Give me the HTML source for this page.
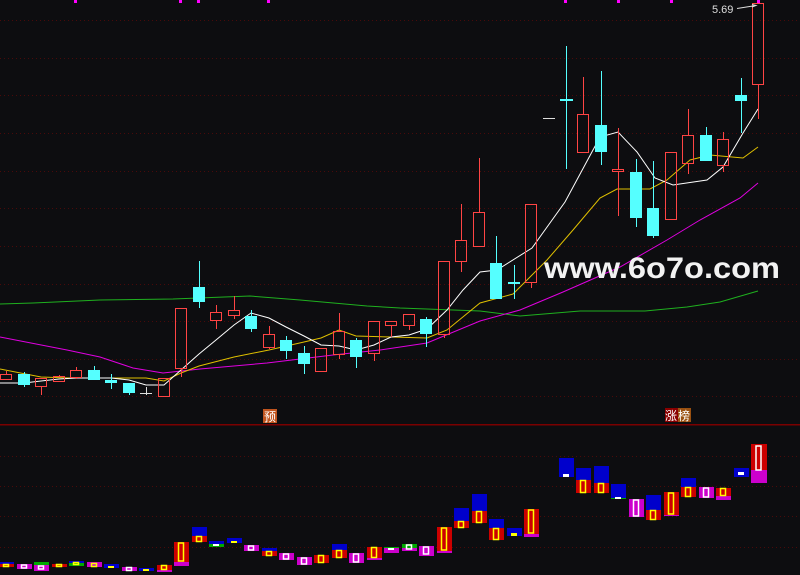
<!DOCTYPE html>
<html><head><meta charset="utf-8"><style>
html,body{margin:0;padding:0;background:#0d0d10;width:800px;height:575px;overflow:hidden}
svg{display:block}
</style></head><body>
<svg width="800" height="575" viewBox="0 0 800 575" xmlns="http://www.w3.org/2000/svg" shape-rendering="crispEdges">
<rect width="800" height="575" fill="#0d0d10"/>
<g stroke="#4a0a0a" stroke-dasharray="1,3" stroke-width="1">
<line x1="0" y1="20.5" x2="800" y2="20.5"/><line x1="0" y1="58.5" x2="800" y2="58.5"/>
<line x1="0" y1="95.5" x2="800" y2="95.5"/><line x1="0" y1="133.5" x2="800" y2="133.5"/>
<line x1="0" y1="171.5" x2="800" y2="171.5"/><line x1="0" y1="208.5" x2="800" y2="208.5"/>
<line x1="0" y1="246.5" x2="800" y2="246.5"/><line x1="0" y1="284.5" x2="800" y2="284.5"/>
<line x1="0" y1="321.5" x2="800" y2="321.5"/><line x1="0" y1="359.5" x2="800" y2="359.5"/>
<line x1="0" y1="396.5" x2="800" y2="396.5"/>
<line x1="0" y1="456.5" x2="800" y2="456.5"/><line x1="0" y1="486.5" x2="800" y2="486.5"/>
<line x1="0" y1="516.5" x2="800" y2="516.5"/><line x1="0" y1="547.5" x2="800" y2="547.5"/>
</g>
<line x1="0" y1="424.5" x2="800" y2="424.5" stroke="#7a0000" stroke-width="1.5"/>
<g fill="#ff00ff">
<rect x="74" y="0" width="3" height="3"/><rect x="179" y="0" width="3" height="3"/><rect x="197" y="0" width="3" height="3"/><rect x="267" y="0" width="3" height="3"/>
<rect x="564" y="0" width="3" height="3"/><rect x="617" y="0" width="3" height="3"/><rect x="670" y="0" width="3" height="3"/><rect x="757" y="0" width="3" height="3"/>
</g>
<g fill="none" stroke-width="1" shape-rendering="auto">
<polyline stroke="#1fb01f" points="0,304 33,303 100,300 173,299 250,296 300,300 367,306 400,308 480,311 520,316 580,311 645,311 687,307 720,302 758,291"/>
<polyline stroke="#e000e0" points="0,337 67,350 100,357 133,368 163,373 200,369 267,363 333,355 380,350 427,343 480,321 520,310 563,292 620,267 667,240 700,220 740,198 758,183"/>
<polyline stroke="#e0c000" points="0,369 41,377 70,378 146,378 164,381 181,373 199,366 234,357 269,350 304,342 321,338 339,330 356,336 391,337 427,338 447,330 480,303 513,294 547,260 573,230 600,198 617,189 650,189 667,180 690,160 710,155 743,158 758,147"/>
<polyline stroke="#ffffff" points="0,383 24,383 41,381 59,379 76,378 111,378 129,380 146,385 164,385 181,370 199,354 216,340 234,325 251,313 269,318 286,327 304,336 321,345 339,346 356,350 374,345 391,337 409,335 427,329 447,310 463,290 480,272 497,270 532,248 565,202 593,150 600,137 618,132 637,152 655,178 673,185 707,180 723,167 743,133 758,109"/>
</g>
<g stroke="#ff4444" fill="none" stroke-width="1">
<path d="M6.5 371V374M6.5 379V380M41.5 386V395M59.5 375V376M59.5 381V382M76.5 367V370M76.5 377V379M181.5 368V377M216.5 305V312M216.5 320V329M234.5 296V310M234.5 315V319M269.5 326V334M269.5 347V349M339.5 313V331M339.5 354V359M374.5 353V361M391.5 325V337M409.5 325V330M444.5 334V338M461.5 204V240M461.5 261V272M479.5 158V212M531.5 282V288M583.5 77V114M618.5 128V169M618.5 171V216M688.5 109V135M688.5 163V174M723.5 132V139M723.5 165V172M758.5 84V119"/>
<rect x="0.5" y="374.5" width="11" height="5"/><rect x="35.5" y="378.5" width="11" height="8"/>
<rect x="53.5" y="376.5" width="11" height="5"/><rect x="70.5" y="370.5" width="11" height="7"/>
<rect x="158.5" y="378.5" width="11" height="18"/><rect x="175.5" y="308.5" width="11" height="60"/>
<rect x="210.5" y="312.5" width="11" height="8"/><rect x="228.5" y="310.5" width="11" height="5"/>
<rect x="263.5" y="334.5" width="11" height="13"/><rect x="315.5" y="348.5" width="11" height="23"/>
<rect x="333.5" y="331.5" width="11" height="23"/><rect x="368.5" y="321.5" width="11" height="32"/>
<rect x="385.5" y="321.5" width="11" height="4"/><rect x="403.5" y="314.5" width="11" height="11"/>
<rect x="438.5" y="261.5" width="11" height="73"/><rect x="455.5" y="240.5" width="11" height="21"/>
<rect x="473.5" y="212.5" width="11" height="34"/><rect x="525.5" y="204.5" width="11" height="78"/>
<rect x="577.5" y="114.5" width="11" height="38"/><rect x="612.5" y="169.5" width="11" height="2"/>
<rect x="665.5" y="152.5" width="11" height="67"/><rect x="682.5" y="135.5" width="11" height="28"/>
<rect x="717.5" y="139.5" width="11" height="26"/><rect x="752.5" y="3.5" width="11" height="81"/>
</g>
<g stroke="#55ffff" stroke-width="1">
<path d="M24.5 372V387M94.5 366V380M111.5 374V389M129.5 383V395M199.5 261V308M251.5 310V332M286.5 336V359M304.5 346V374M356.5 338V368M426.5 317V347M496.5 236V299M514.5 265V299M566.5 46V169M601.5 71V165M636.5 159V227M653.5 161V238M706.5 127V161M741.5 78V133"/>
</g>
<g fill="#55ffff">
<rect x="18" y="374" width="12" height="11"/><rect x="88" y="370" width="12" height="10"/>
<rect x="105" y="380" width="12" height="3"/><rect x="123" y="383" width="12" height="10"/>
<rect x="193" y="287" width="12" height="15"/><rect x="245" y="316" width="12" height="13"/>
<rect x="280" y="340" width="12" height="11"/><rect x="298" y="353" width="12" height="11"/>
<rect x="350" y="340" width="12" height="17"/><rect x="420" y="319" width="12" height="15"/>
<rect x="490" y="263" width="12" height="36"/><rect x="508" y="282" width="12" height="2"/>
<rect x="560" y="99" width="13" height="2"/><rect x="595" y="125" width="12" height="27"/>
<rect x="630" y="172" width="12" height="46"/><rect x="647" y="208" width="12" height="28"/>
<rect x="700" y="135" width="12" height="26"/><rect x="735" y="95" width="12" height="6"/>
</g>
<g stroke="#dddddd" stroke-width="1">
<path d="M140 393.5H152M146.5 387V395M543 118.5H555"/>
</g>
<text x="712" y="13" font-family="Liberation Sans, sans-serif" font-size="11" fill="#dddddd">5.69</text>
<path d="M737 8.5L756 5.5M752 4.5L756 5.5L752 7" stroke="#dddddd" fill="none" shape-rendering="auto"/>
<text x="544" y="278" font-family="Liberation Sans, sans-serif" font-weight="bold" font-size="30" fill="#f2f2f2" textLength="236" lengthAdjust="spacingAndGlyphs">www.6o7o.com</text>
<rect x="263" y="409" width="14" height="14" fill="#c0541e"/>
<text x="264" y="421" font-family="Noto Sans CJK SC, sans-serif" font-size="12" fill="#fff">预</text>
<rect x="665" y="408" width="13" height="14" fill="#8a0000"/><rect x="678" y="408" width="13" height="14" fill="#9a5010"/>
<text x="665" y="420" font-family="Noto Sans CJK SC, sans-serif" font-size="12" fill="#fff">涨</text>
<text x="678" y="420" font-family="Noto Sans CJK SC, sans-serif" font-size="12" fill="#fff">榜</text>
<g>
<rect x="0" y="562" width="14" height="2" fill="#0000cc"/><rect x="0" y="564" width="14" height="3" fill="#cc0000"/>
<rect x="17" y="564" width="15" height="5" fill="#cc00cc"/>
<rect x="34" y="562" width="15" height="3" fill="#00aa00"/><rect x="34" y="565" width="15" height="6" fill="#cc00cc"/>
<rect x="52" y="564" width="15" height="3" fill="#cc0000"/>
<rect x="69" y="561" width="15" height="2" fill="#0000cc"/><rect x="69" y="563" width="15" height="3" fill="#00aa00"/>
<rect x="87" y="562" width="15" height="5" fill="#cc00cc"/>
<rect x="104" y="564" width="15" height="4" fill="#0000cc"/>
<rect x="122" y="567" width="15" height="4" fill="#cc00cc"/>
<rect x="139" y="568" width="15" height="3" fill="#0000cc"/>
<rect x="157" y="565" width="15" height="5" fill="#cc0000"/><rect x="157" y="570" width="15" height="2" fill="#cc00cc"/>
<rect x="174" y="542" width="15" height="20" fill="#cc0000"/><rect x="174" y="562" width="15" height="4" fill="#cc00cc"/>
<rect x="192" y="527" width="15" height="9" fill="#0000cc"/><rect x="192" y="536" width="15" height="6" fill="#cc0000"/>
<rect x="209" y="541" width="15" height="3" fill="#0000cc"/><rect x="209" y="544" width="15" height="3" fill="#00aa00"/>
<rect x="227" y="538" width="15" height="5" fill="#0000cc"/>
<rect x="244" y="545" width="15" height="6" fill="#cc00cc"/>
<rect x="262" y="548" width="15" height="3" fill="#0000cc"/><rect x="262" y="551" width="15" height="5" fill="#cc0000"/>
<rect x="279" y="553" width="15" height="7" fill="#cc00cc"/>
<rect x="297" y="557" width="15" height="8" fill="#cc00cc"/>
<rect x="314" y="555" width="15" height="8" fill="#cc0000"/>
<rect x="332" y="544" width="15" height="6" fill="#0000cc"/><rect x="332" y="550" width="15" height="8" fill="#cc0000"/>
<rect x="349" y="553" width="15" height="10" fill="#cc00cc"/>
<rect x="367" y="547" width="15" height="11" fill="#cc0000"/><rect x="367" y="558" width="15" height="2" fill="#cc00cc"/>
<rect x="384" y="547" width="15" height="1" fill="#00aa00"/><rect x="384" y="548" width="15" height="5" fill="#cc00cc"/>
<rect x="402" y="544" width="15" height="4" fill="#00aa00"/><rect x="402" y="548" width="15" height="3" fill="#cc00cc"/>
<rect x="419" y="546" width="15" height="10" fill="#cc00cc"/>
<rect x="437" y="527" width="15" height="24" fill="#cc0000"/><rect x="437" y="551" width="15" height="2" fill="#cc00cc"/>
<rect x="454" y="508" width="15" height="13" fill="#0000cc"/><rect x="454" y="521" width="15" height="7" fill="#cc0000"/>
<rect x="472" y="494" width="15" height="17" fill="#0000cc"/><rect x="472" y="511" width="15" height="12" fill="#cc0000"/>
<rect x="489" y="519" width="15" height="9" fill="#0000cc"/><rect x="489" y="528" width="15" height="12" fill="#cc0000"/>
<rect x="507" y="528" width="15" height="8" fill="#0000cc"/>
<rect x="524" y="509" width="15" height="25" fill="#cc0000"/><rect x="524" y="534" width="15" height="3" fill="#cc00cc"/>
<rect x="559" y="458" width="15" height="19" fill="#0000cc"/>
<rect x="576" y="468" width="15" height="12" fill="#0000cc"/><rect x="576" y="480" width="15" height="13" fill="#cc0000"/>
<rect x="594" y="466" width="15" height="17" fill="#0000cc"/><rect x="594" y="483" width="15" height="10" fill="#cc0000"/>
<rect x="611" y="484" width="15" height="14" fill="#0000cc"/><rect x="611" y="498" width="15" height="1" fill="#00aa00"/>
<rect x="629" y="499" width="15" height="18" fill="#cc00cc"/>
<rect x="646" y="495" width="15" height="15" fill="#0000cc"/><rect x="646" y="510" width="15" height="10" fill="#cc0000"/>
<rect x="664" y="492" width="15" height="23" fill="#cc0000"/><rect x="664" y="515" width="15" height="1" fill="#cc00cc"/>
<rect x="681" y="478" width="15" height="9" fill="#0000cc"/><rect x="681" y="487" width="15" height="10" fill="#cc0000"/>
<rect x="699" y="487" width="15" height="11" fill="#cc00cc"/>
<rect x="716" y="488" width="15" height="8" fill="#cc0000"/><rect x="716" y="496" width="15" height="4" fill="#cc00cc"/>
<rect x="734" y="468" width="15" height="9" fill="#0000cc"/>
<rect x="751" y="444" width="16" height="26" fill="#cc0000"/><rect x="751" y="470" width="16" height="13" fill="#cc00cc"/>
</g>
<g fill="none" stroke-width="1.5" shape-rendering="auto">
<g stroke="#ffff00">
<rect x="3.5" y="564.5" width="5" height="2"/><rect x="56.5" y="564.5" width="5" height="2"/><rect x="73.5" y="562.5" width="5" height="2"/>
<rect x="91.5" y="563.5" width="5" height="3"/><rect x="161.5" y="565.5" width="5" height="4"/><rect x="178.5" y="543" width="5" height="18"/>
<rect x="196.5" y="536.5" width="5" height="5"/><rect x="266.5" y="551.5" width="5" height="4"/><rect x="318.5" y="555.5" width="5" height="7"/>
<rect x="336.5" y="550.5" width="5" height="7"/><rect x="371.5" y="547.5" width="5" height="10"/><rect x="441.5" y="528" width="5" height="22"/>
<rect x="458.5" y="521.5" width="5" height="6"/><rect x="476.5" y="511.5" width="5" height="11"/><rect x="493.5" y="528.5" width="5" height="11"/>
<rect x="528.5" y="510" width="5" height="23"/><rect x="580.5" y="480.5" width="5" height="12"/><rect x="598.5" y="483.5" width="5" height="9"/>
<rect x="650.5" y="510.5" width="5" height="9"/><rect x="668.5" y="493" width="5" height="21"/><rect x="685.5" y="487.5" width="5" height="9"/>
<rect x="720.5" y="488.5" width="5" height="7"/>
</g>
<g stroke="#ffffff">
<rect x="21.5" y="565" width="5" height="3"/><rect x="38.5" y="566" width="5" height="3"/><rect x="126.5" y="567.5" width="5" height="3"/>
<rect x="248.5" y="546" width="5" height="4"/><rect x="283.5" y="554" width="5" height="5"/><rect x="301.5" y="558" width="5" height="6"/>
<rect x="353.5" y="554" width="5" height="8"/><rect x="406.5" y="545" width="5" height="4"/><rect x="423.5" y="547" width="5" height="7"/>
<rect x="633.5" y="500" width="5" height="16"/><rect x="703.5" y="488" width="5" height="9"/><rect x="756" y="446" width="5" height="24"/>
</g>
</g>
<g fill="#ffff00">
<rect x="108" y="566" width="6" height="2"/><rect x="143" y="569" width="6" height="2"/><rect x="231" y="541" width="6" height="2"/><rect x="511" y="533" width="6" height="3"/>
</g>
<g fill="#ffffff">
<rect x="213" y="544" width="6" height="2"/><rect x="388" y="548" width="6" height="2"/><rect x="563" y="474" width="6" height="3"/><rect x="615" y="497" width="6" height="2"/><rect x="738" y="472" width="6" height="3"/>
</g>
</svg>
</body></html>
